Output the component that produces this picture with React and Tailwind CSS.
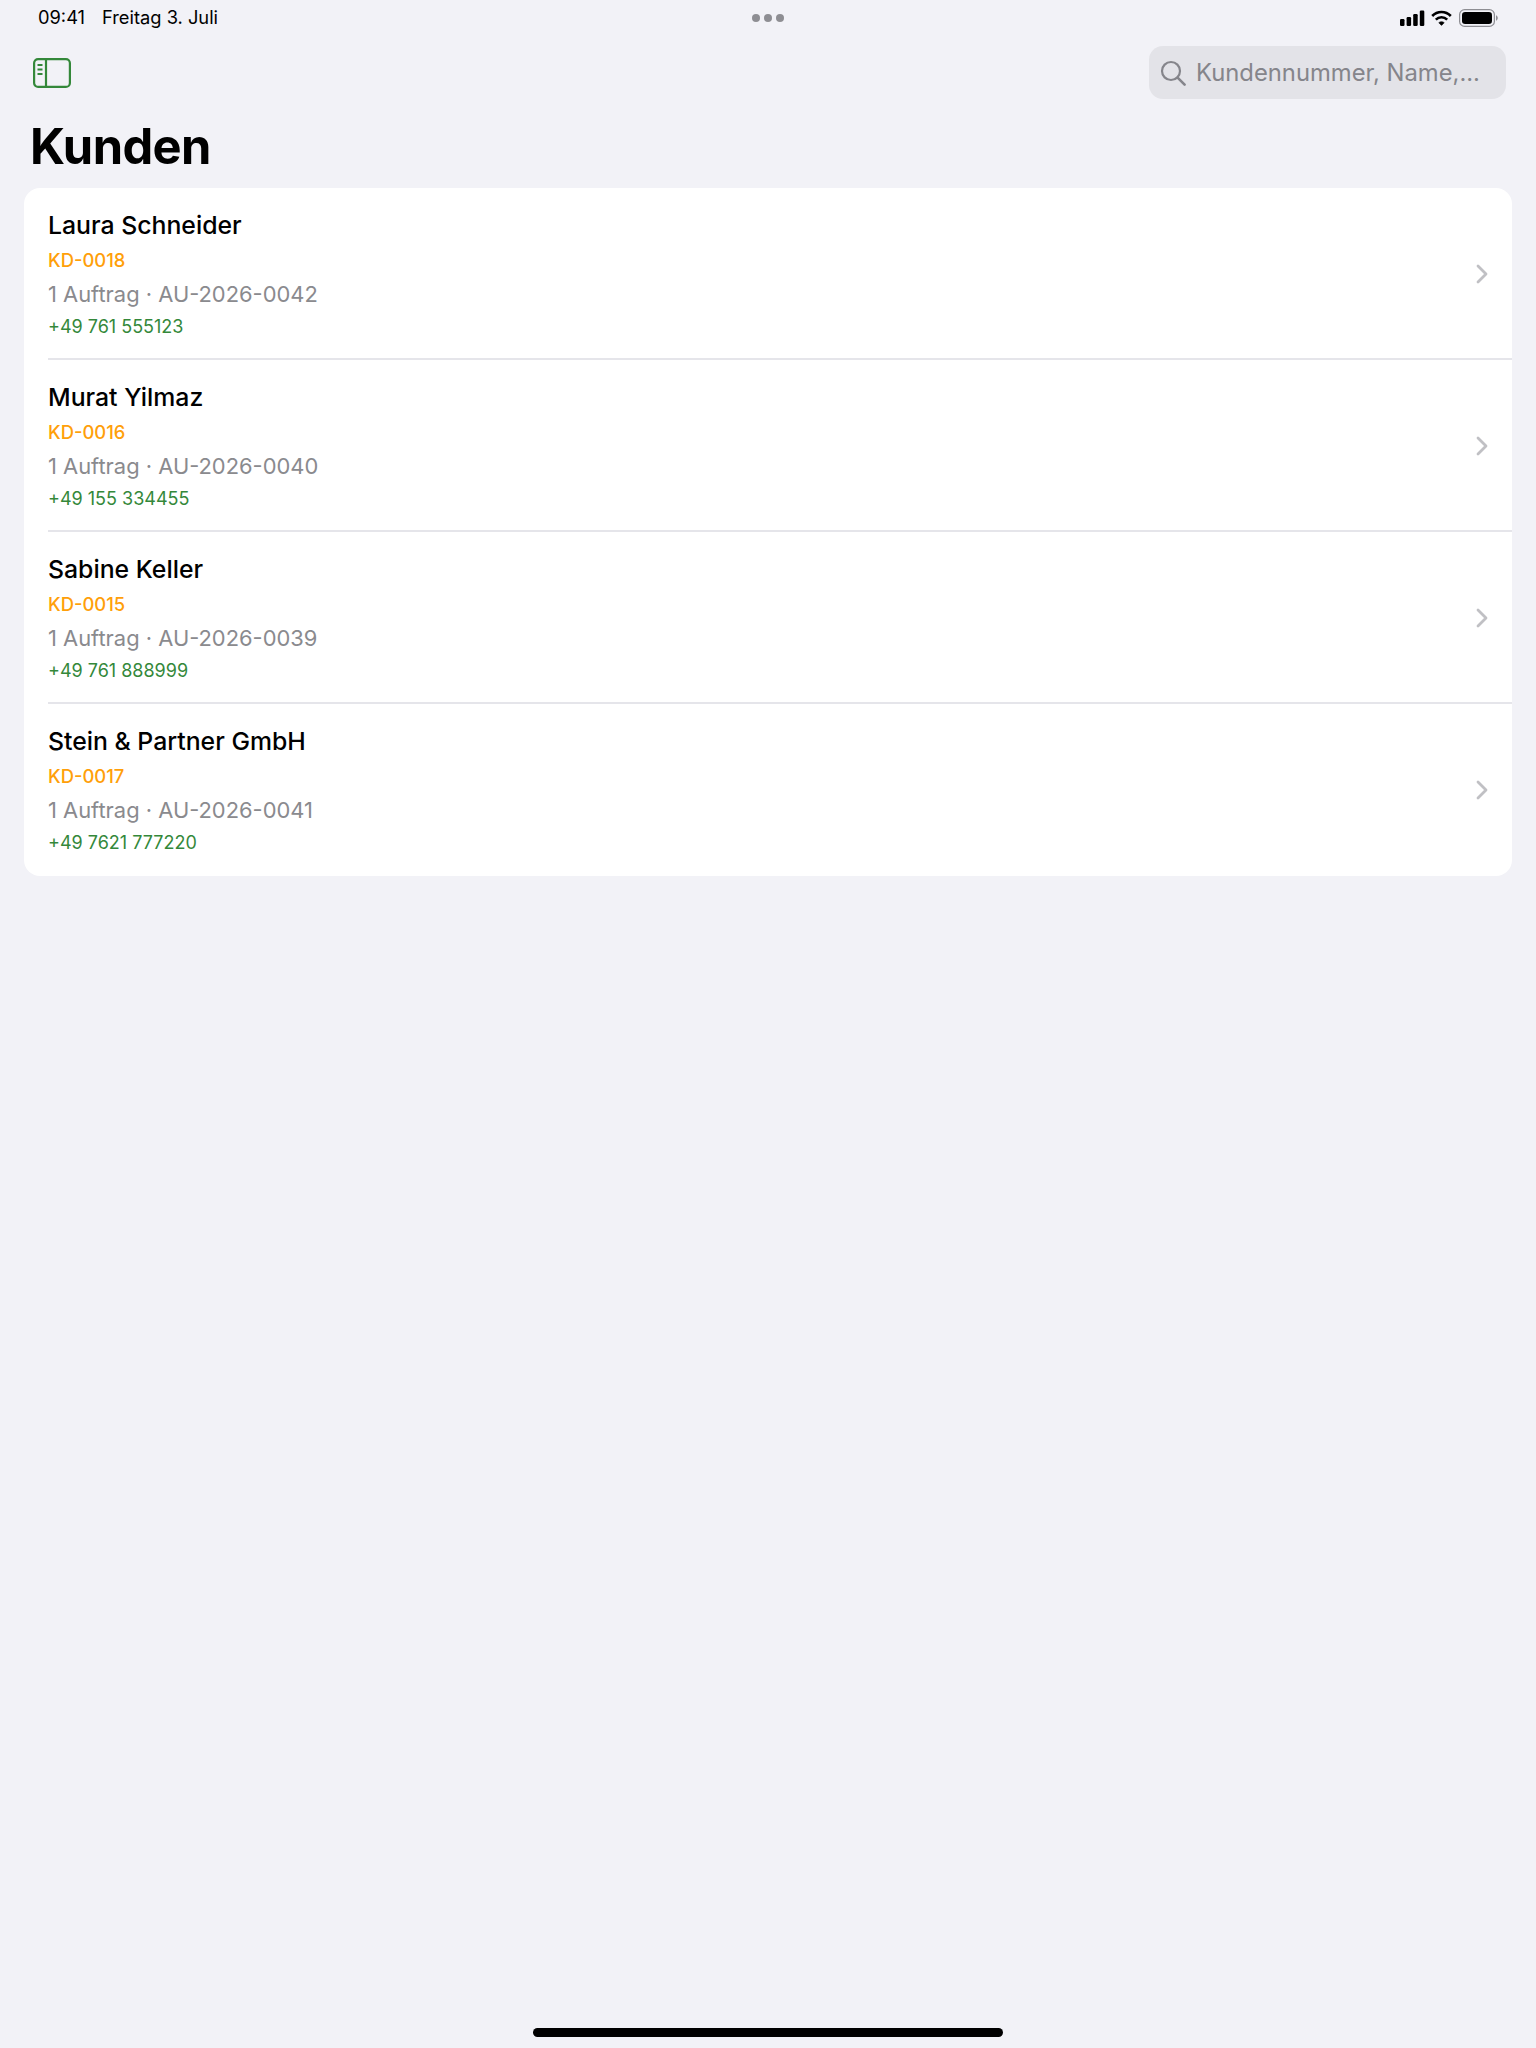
const customers = [
  { name: 'Laura Schneider', id: 'KD-0018', order: '1 Auftrag · AU-2026-0042', phone: '+49 761 555123' },
  { name: 'Murat Yilmaz', id: 'KD-0016', order: '1 Auftrag · AU-2026-0040', phone: '+49 155 334455' },
  { name: 'Sabine Keller', id: 'KD-0015', order: '1 Auftrag · AU-2026-0039', phone: '+49 761 888999' },
  { name: 'Stein & Partner GmbH', id: 'KD-0017', order: '1 Auftrag · AU-2026-0041', phone: '+49 7621 777220' },
];

export default function App() {
  return (
    <div className="flex min-h-[2048px] flex-col bg-[#f2f2f7] font-['Inter',sans-serif] text-black">
      <StatusBar />
      <Toolbar />
      <h1 className="mt-[20px] pl-[30px] text-[48.8px] leading-[56px] font-bold tracking-[-0.6px]">Kunden</h1>

      <div className="mx-6 mt-[13px] overflow-hidden rounded-[16px] bg-white">
        {customers.map((customer, index) => (
          <CustomerRow key={customer.id} {...customer} last={index === customers.length - 1} />
        ))}
      </div>

      <div className="mt-auto flex justify-center pb-[11px]">
        <div className="h-[9px] w-[470px] rounded-full bg-black" />
      </div>
    </div>
  );
}

function StatusBar() {
  return (
    <div className="relative flex h-[36px] items-center justify-between pr-[38px] pl-[38px]">
      <div className="-mt-[1px] flex items-center gap-[17px] text-[18.3px] leading-none">
        <span>09:41</span>
        <span>Freitag 3. Juli</span>
      </div>
      <div className="absolute top-[14px] left-[752px] flex gap-[4px]">
        <span className="h-[8px] w-[8px] rounded-full bg-[#8e8e93]" />
        <span className="h-[8px] w-[8px] rounded-full bg-[#8e8e93]" />
        <span className="h-[8px] w-[8px] rounded-full bg-[#8e8e93]" />
      </div>
      <div className="flex items-center gap-[6px]">
        <svg width="25" height="16" viewBox="0 0 25 16" fill="black">
          <rect x="0" y="9" width="4.5" height="7" rx="1.2" />
          <rect x="6.6" y="7" width="4.5" height="9" rx="1.2" />
          <rect x="13.2" y="4" width="4.5" height="12" rx="1.2" />
          <rect x="19.8" y="0.5" width="4.5" height="15.5" rx="1.2" />
        </svg>
        <svg width="21" height="16" viewBox="0 0 21 16" fill="none" stroke="black" strokeWidth="2.6">
          <path d="M1.2 6 C6.4 0.6 14.6 0.6 19.8 6" />
          <path d="M4.8 9.6 C8 6.4 13 6.4 16.2 9.6" />
          <path d="M10.5 15.4 L7.8 12.7 C9.3 11.3 11.7 11.3 13.2 12.7 Z" fill="black" strokeWidth="0.6" />
        </svg>
        <svg className="ml-[1px]" width="39" height="18" viewBox="0 0 39 18" fill="none">
          <rect x="0.6" y="0.6" width="34.8" height="16.8" rx="5" stroke="#8e8e93" strokeWidth="1.2" />
          <rect x="3" y="3" width="30" height="12" rx="3.2" fill="black" />
          <path d="M37 6.2 C38.2 6.8 38.8 7.8 38.8 9 C38.8 10.2 38.2 11.2 37 11.8 Z" fill="#8e8e93" />
        </svg>
      </div>
    </div>
  );
}

function Toolbar() {
  return (
    <div className="mt-[10px] flex items-center justify-between pr-[30px] pl-[33px]">
      <svg width="38" height="30" viewBox="0 0 38 30" fill="none" stroke="#34883a" strokeWidth="2.2">
        <rect x="1.1" y="1.1" width="35.8" height="27.8" rx="4" />
        <path d="M13 1 V29" />
        <path d="M4.5 7 H9.5 M4.5 11.5 H9.5 M4.5 16 H9.5" />
      </svg>
      <div className="flex h-[53px] w-[357px] items-center gap-[10px] rounded-[14px] bg-[#e3e3e8] pl-[11px] text-[#85858b]">
        <svg width="26" height="26" viewBox="0 0 26 26" fill="none" stroke="currentColor" strokeWidth="2.2" strokeLinecap="round">
          <circle cx="11" cy="11" r="9" />
          <path d="M17.6 17.6 L24.6 24.6" strokeWidth="2.6" />
        </svg>
        <span className="text-[23.8px] leading-none">Kundennummer, Name,...</span>
      </div>
    </div>
  );
}

function CustomerRow({ name, id, order, phone, last }) {
  return (
    <div className="relative flex h-[172px] items-center pl-[24px]">
      <div className="flex-1">
        <div className="text-[24.8px] leading-[32px] font-[550]">{name}</div>
        <div className="mt-[7px] text-[18.4px] leading-[24px] font-medium text-[#ff9f0a]">{id}</div>
        <div className="mt-[7px] text-[21.9px] leading-[30px] text-[#8a8a8e]">{order}</div>
        <div className="mt-[6px] text-[18px] leading-[24px] text-[#34883a]">{phone}</div>
      </div>
      <svg className="mr-[24px]" width="12" height="20" viewBox="0 0 12 20" fill="none" stroke="#c0c0c4" strokeWidth="2.8" strokeLinecap="round" strokeLinejoin="round">
        <path d="M2 2 L10 10 L2 18" />
      </svg>
      {!last && <div className="absolute right-0 bottom-0 left-[24px] h-[2px] bg-[#e5e5ea]" />}
    </div>
  );
}
